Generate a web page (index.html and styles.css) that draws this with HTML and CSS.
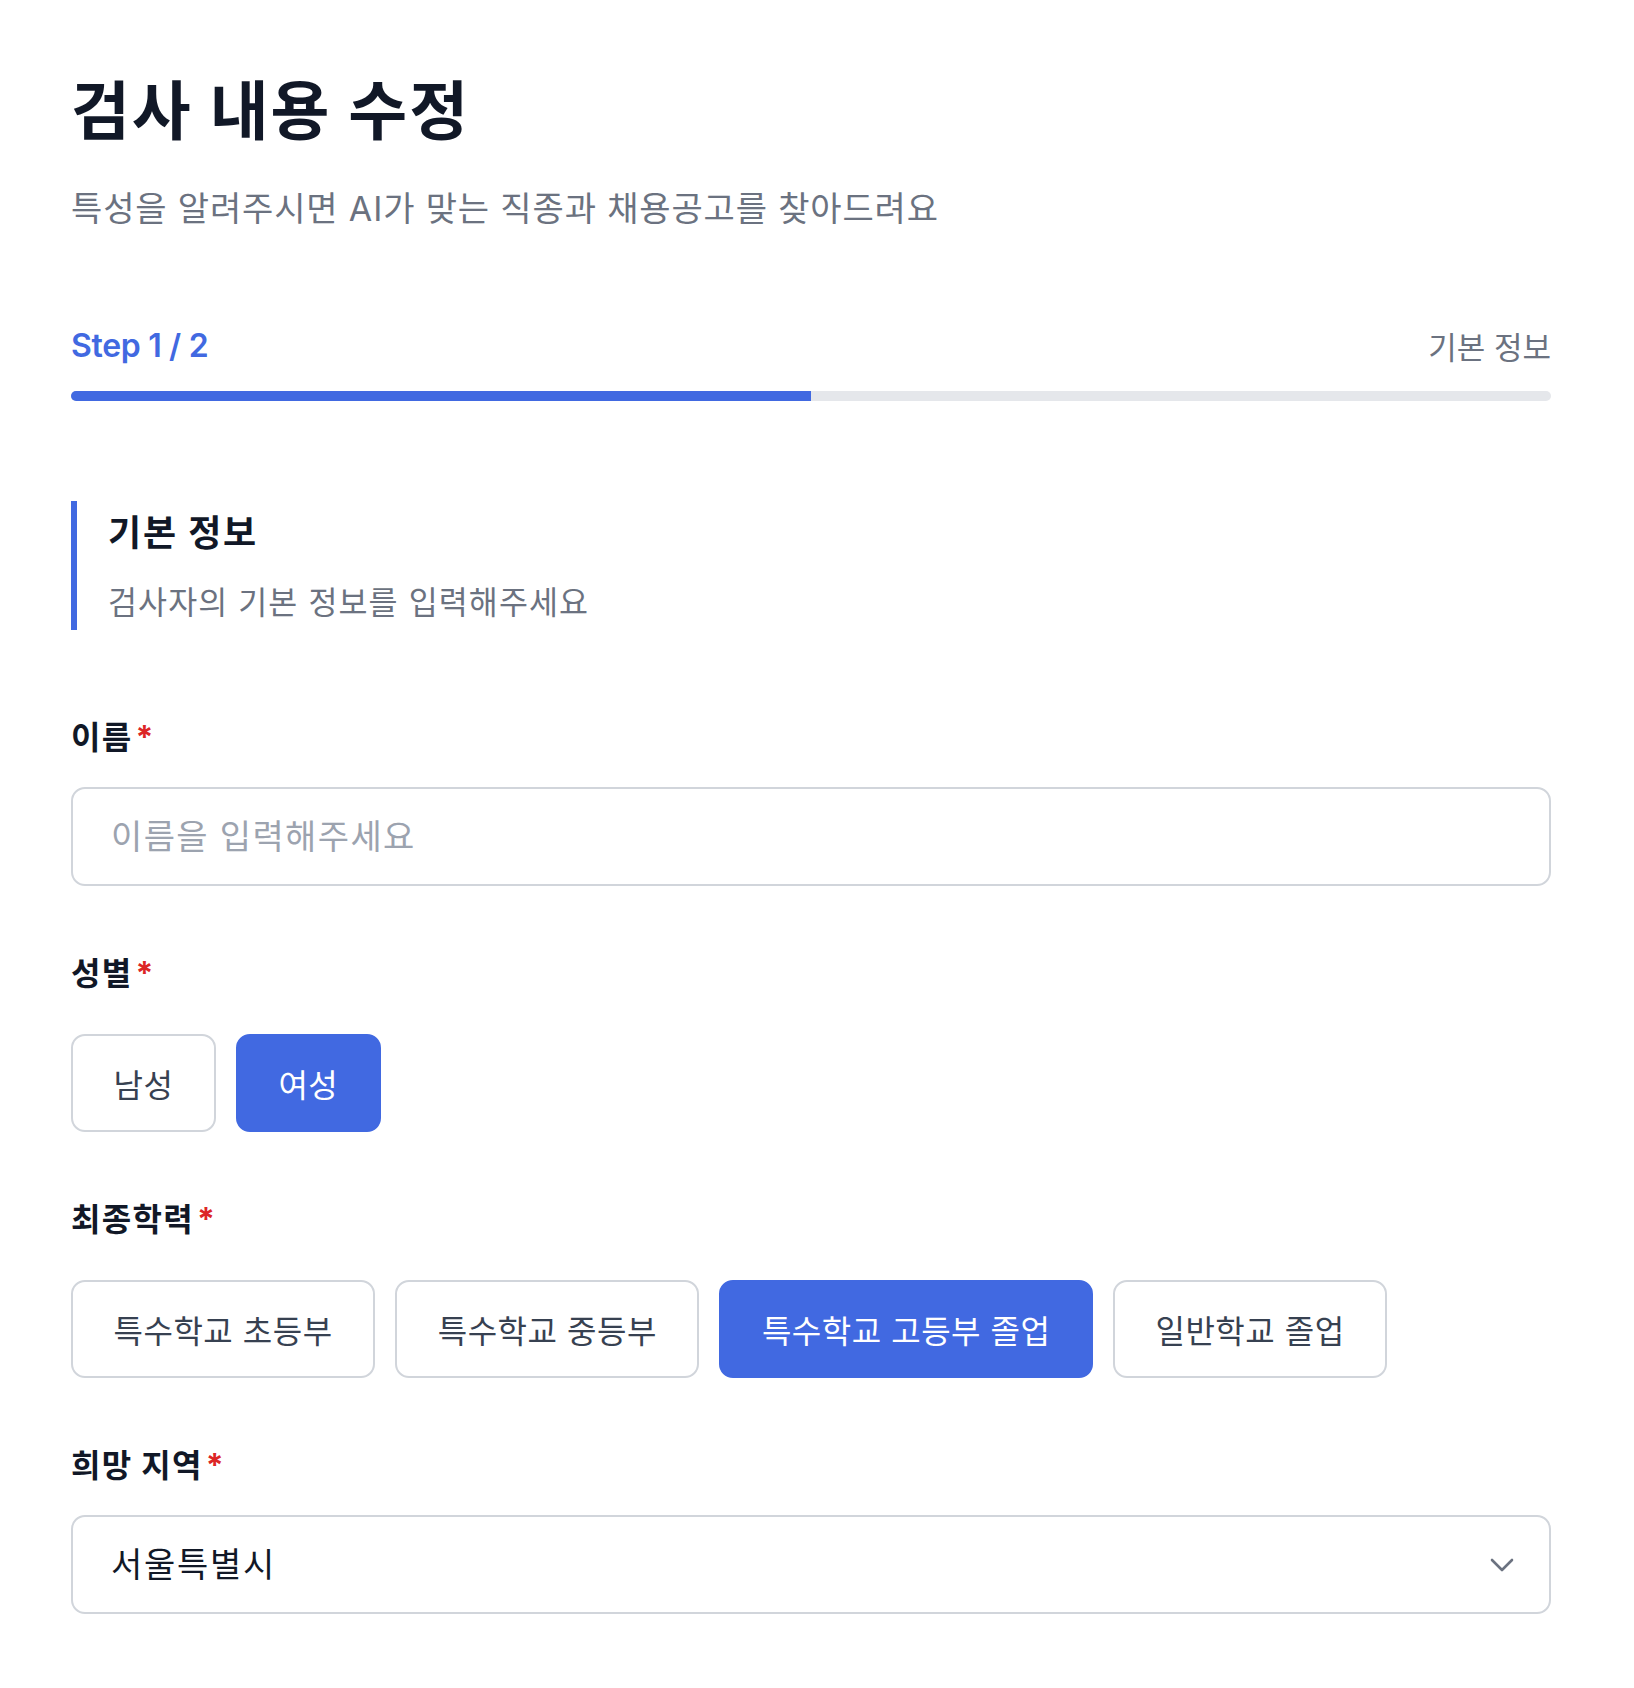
FILE: index.html
```html
<!DOCTYPE html>
<html lang="ko">
<head>
<meta charset="utf-8">
<title>검사 내용 수정</title>
<link rel="stylesheet" href="styles.css">
</head>
<body>
<main class="page">
  <header class="page-header">
    <h1 class="page-title">검사 내용 수정</h1>
    <p class="page-subtitle">특성을 알려주시면 AI가 맞는 직종과 채용공고를 찾아드려요</p>
  </header>

  <div class="progress">
    <div class="progress-info">
      <span class="progress-step">Step 1 / 2</span>
      <span class="progress-name">기본 정보</span>
    </div>
    <div class="progress-track"><div class="progress-fill" style="width:50%"></div></div>
  </div>

  <form class="form">
    <div class="section-head">
      <h2 class="section-title">기본 정보</h2>
      <p class="section-desc">검사자의 기본 정보를 입력해주세요</p>
    </div>

    <div class="field field-first">
      <label class="field-label" for="name">이름<span class="req">*</span></label>
      <input class="text-input" id="name" type="text" placeholder="이름을 입력해주세요">
    </div>

    <div class="field">
      <div class="field-label">성별<span class="req">*</span></div>
      <div class="options">
        <button type="button" class="option">남성</button>
        <button type="button" class="option is-selected">여성</button>
      </div>
    </div>

    <div class="field">
      <div class="field-label">최종학력<span class="req">*</span></div>
      <div class="options">
        <button type="button" class="option">특수학교 초등부</button>
        <button type="button" class="option">특수학교 중등부</button>
        <button type="button" class="option is-selected">특수학교 고등부 졸업</button>
        <button type="button" class="option">일반학교 졸업</button>
      </div>
    </div>

    <div class="field">
      <label class="field-label" for="region">희망 지역<span class="req">*</span></label>
      <div class="select-wrap">
        <select class="select" id="region">
          <option>서울특별시</option>
          <option>부산광역시</option>
          <option>경기도</option>
        </select>
        <svg class="select-icon" width="24" height="14" viewBox="0 0 24 14" aria-hidden="true">
          <polyline points="2,2 12,12 22,2" fill="none" stroke="#6b7280" stroke-width="2.6" stroke-linecap="round" stroke-linejoin="round"/>
        </svg>
      </div>
    </div>
  </form>
</main>
</body>
</html>
```

FILE: styles.css
```css
* {
  box-sizing: border-box;
}

body {
  margin: 0;
  background: #ffffff;
  font-family: Inter, "Noto Sans CJK KR", "Noto Sans", sans-serif;
  color: #111827;
}

.page {
  width: 1480px;
  margin-left: 71px;
  padding-top: 75px;
  padding-bottom: 60px;
}

.page-title {
  margin: 0;
  font-size: 64px;
  line-height: 72px;
  font-weight: 700;
  letter-spacing: 0.03em;
  color: #111827;
}

.page-subtitle {
  margin: 38px 0 0;
  font-size: 34px;
  line-height: 48px;
  letter-spacing: 0.025em;
  color: #6b7280;
}

.progress {
  margin-top: 88px;
}

.progress-info {
  display: flex;
  justify-content: space-between;
  align-items: center;
  height: 48px;
}

.progress-step {
  font-size: 32px;
  font-weight: 600;
  letter-spacing: -0.01em;
  color: #4169e1;
}

.progress-name {
  font-size: 31px;
  letter-spacing: 0;
  color: #6b7280;
}

.progress-track {
  margin-top: 22px;
  height: 10px;
  border-radius: 5px;
  background: #e5e7eb;
  overflow: hidden;
}

.progress-fill {
  height: 100%;
  background: #4169e1;
}

.section-head {
  margin-top: 100px;
  border-left: 6px solid #4169e1;
  padding: 4px 0 5px 31px;
}

.section-title {
  margin: 0;
  font-size: 36px;
  line-height: 56px;
  font-weight: 700;
  letter-spacing: 0.05em;
  color: #111827;
}

.section-desc {
  margin: 20px 0 0;
  font-size: 31.5px;
  line-height: 44px;
  letter-spacing: 0.035em;
  color: #6b7280;
}

.field {
  margin-top: 64px;
}

.field-first {
  margin-top: 84px;
}

.field-label {
  display: block;
  font-size: 32px;
  line-height: 48px;
  font-weight: 700;
  letter-spacing: 0.04em;
  color: #111827;
}

.req {
  margin-left: 3px;
  color: #dc2626;
  letter-spacing: 0;
}

.text-input,
.select {
  display: block;
  width: 100%;
  height: 99px;
  margin: 0;
  padding: 0 38px;
  border: 2px solid #d1d5db;
  border-radius: 14px;
  background: #ffffff;
  font-family: Inter, "Noto Sans CJK KR", "Noto Sans", sans-serif;
  font-size: 34px;
  letter-spacing: 0.05em;
  color: #111827;
  outline: none;
}

.text-input {
  margin-top: 25px;
  letter-spacing: 0.04em;
}

.text-input::placeholder {
  color: #9ca3af;
  opacity: 1;
}

.options {
  margin-top: 36px;
  display: flex;
  flex-wrap: wrap;
  gap: 20px;
}

.option {
  height: 98px;
  padding: 0 40.5px;
  border: 2px solid #d1d5db;
  border-radius: 14px;
  background: #ffffff;
  font-family: Inter, "Noto Sans CJK KR", "Noto Sans", sans-serif;
  font-size: 32px;
  letter-spacing: 0.016em;
  color: #374151;
  cursor: pointer;
}

.option.is-selected {
  background: #4169e1;
  border-color: #4169e1;
  color: #ffffff;
}

.select-wrap {
  position: relative;
  margin-top: 25px;
}

.select {
  appearance: none;
  -webkit-appearance: none;
  cursor: pointer;
}

.select-icon {
  position: absolute;
  right: 37px;
  top: 50%;
  transform: translateY(-50%);
  pointer-events: none;
}
```
